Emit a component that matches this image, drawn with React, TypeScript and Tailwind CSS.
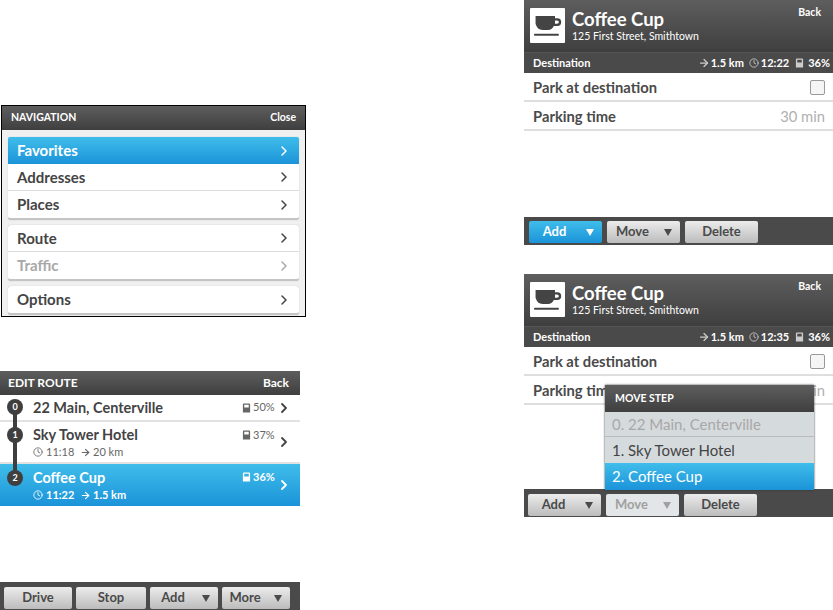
import React from 'react';
import { ChevronRight, Clock, ArrowRight } from 'lucide-react';

const font = "font-['Lato',sans-serif]";
const bar = 'bg-gradient-to-b from-[#5e5e5e] to-[#3f3f3f]';
const blue = 'bg-gradient-to-b from-[#3fbdea] to-[#1b93d9]';

const Battery = ({ className = '' }: { className?: string }) => (
  <svg viewBox="0 0 10 11" className={`w-[9px] h-[10px] ${className}`} fill="currentColor">
    <path d="M1 1.5 Q1 .5 2 .5 H8 Q9 .5 9 1.5 V10.5 H1 Z M2.5 2 V5 H7.5 V2 Z" fillRule="evenodd" />
  </svg>
);

const Triangle = ({ className = '' }: { className?: string }) => (
  <svg viewBox="0 0 8 8" className={`w-2 h-2 ${className}`} fill="currentColor">
    <path d="M0 1 H8 L4 8 Z" />
  </svg>
);

const CoffeeIcon = () => (
  <svg viewBox="0 0 36 30" className="w-[28px] h-[24px] text-[#444]" fill="currentColor">
    <path d="M2 2 H27 V5 H30 Q35 5 35 10 Q35 15 30 15 H25.5 Q23 20 18 20 H11 Q4 20 2 12 Z M27 8 V12 H29.5 Q32 12 32 10 Q32 8 29.5 8 Z" fillRule="evenodd" />
    <rect x="0" y="25" width="32" height="2.5" rx="1" />
  </svg>
);

const TopBar = ({ title, action, className }: { title: string; action: string; className: string }) => (
  <div className={`${bar} ${className} flex items-center justify-between text-white font-bold`}>
    <span>{title}</span>
    <span>{action}</span>
  </div>
);

const NavRow = ({ label, active, muted, line }: { label: string; active?: boolean; muted?: boolean; line?: boolean }) => (
  <div
    className={`h-[27px] flex items-center justify-between pl-[9px] pr-[7px] text-[15px] font-bold ${
      active ? `${blue} text-white rounded-t-[2px]` : muted ? 'text-[#a8a8a8]' : 'text-[#444]'
    } ${line ? 'border-b border-[#dcdcdc]' : ''}`}
  >
    <span>{label}</span>
    <ChevronRight className="w-4 h-4" strokeWidth={2.25} />
  </div>
);

const NavGroup = ({ children }: { children: React.ReactNode }) => (
  <div className="bg-white rounded-[3px] border-b-2 border-[#c4c4c4] shadow-[0_0_1px_#aaa]">{children}</div>
);

const ToolButton = ({
  label,
  width,
  menu,
  active,
  disabled,
}: {
  label: string;
  width: string;
  menu?: boolean;
  active?: boolean;
  disabled?: boolean;
}) => (
  <div
    className={`${width} h-[22px] rounded-[2px] flex items-center justify-center relative text-[13px] font-bold ${
      active
        ? `${blue} text-white`
        : disabled
          ? 'bg-[#e3e6e8] text-[#a0a0a0]'
          : 'bg-gradient-to-b from-[#ececec] to-[#bcbcbc] text-[#4a4a4a]'
    } ${menu ? 'pr-[22px]' : ''}`}
  >
    <span>{label}</span>
    {menu && <Triangle className="absolute right-[8px] top-[7px]" />}
  </div>
);

const StopRow = ({
  num,
  name,
  pct,
  sub,
  active,
}: {
  num: string;
  name: string;
  pct: string;
  sub?: [string, string];
  active?: boolean;
}) => (
  <div
    className={`flex items-center pl-[33px] pr-[8px] ${sub ? 'h-[42px]' : 'h-[27px]'} ${
      active ? `${blue} text-white` : 'bg-white text-[#444] border-b-2 border-[#e2e2e2]'
    }`}
  >
    <span
      className={`absolute left-[7px] w-[16px] h-[16px] rounded-full bg-[#3f3f3f] text-white text-[9px] font-bold flex items-center justify-center z-10 ${
        sub ? 'mt-[-15px]' : 'mt-[-2px]'
      }`}
    >
      {num}
    </span>
    <div className="flex-1 min-w-0">
      <div className="text-[14.5px] leading-[20px] font-bold">{name}</div>
      {sub && (
        <div className={`flex items-center text-[11px] leading-[14px] ${active ? 'font-bold' : 'text-[#666]'}`}>
          <Clock className="w-[10px] h-[10px] mr-[3px]" />
          <span className="w-[23px] whitespace-nowrap">{sub[0]}</span>
          <ArrowRight className="w-[11px] h-[11px] ml-[11px] mr-[2px]" strokeWidth={2.5} />
          <span>{sub[1]}</span>
        </div>
      )}
    </div>
    <div className={`flex items-center gap-[2px] text-[11px] w-[33px] ${sub ? 'self-start mt-[5px]' : ''} ${active ? 'font-bold' : 'text-[#666]'}`}>
      <Battery />
      <span>{pct}</span>
    </div>
    <ChevronRight className="w-4 h-4 ml-[1px]" strokeWidth={2.75} />
  </div>
);

const PlaceHeader = ({ time }: { time: string }) => (
  <>
    <div className={`${bar} h-[52px] flex items-start pl-[6px] pr-[12px] pt-[8px] text-white`}>
      <div className="w-[35px] h-[35px] bg-white rounded-[1px] flex items-center justify-center shrink-0">
        <CoffeeIcon />
      </div>
      <div className="ml-[7px] flex-1">
        <div className="text-[18.5px] leading-[22px] font-bold">Coffee Cup</div>
        <div className="text-[10.5px] leading-[12px]">125 First Street, Smithtown</div>
      </div>
      <span className="text-[10.5px] font-bold mt-[-3px]">Back</span>
    </div>
    <div className="h-[21px] bg-[#4a4a4a] border-t border-[#555] flex items-center justify-between pl-[9px] pr-[3px] text-white text-[11px] font-bold">
      <span>Destination</span>
      <div className="flex items-center">
        <ArrowRight className="w-[12px] h-[12px] text-[#ccc]" strokeWidth={2.5} />
        <span className="ml-[1px]">1.5 km</span>
        <Clock className="w-[10px] h-[10px] ml-[5px] mr-[2px] text-[#ccc]" />
        <span>{time}</span>
        <Battery className="ml-[6px] mr-[4px] text-[#ccc]" />
        <span>36%</span>
      </div>
    </div>
    <div className="h-[29px] pt-[1px] border-b-2 border-[#dedede] flex items-center justify-between pl-[9px] pr-[8px] text-[14.75px] font-bold text-[#4a4a4a]">
      <span>Park at destination</span>
      <span className="w-[15px] h-[15px] rounded-[2px] border border-[#999] bg-[#f5f5f5]" />
    </div>
    <div className="h-[29px] pt-[1px] border-b-2 border-[#dedede] flex items-center justify-between pl-[9px] pr-[8px] text-[14.75px] font-bold text-[#4a4a4a]">
      <span>Parking time</span>
      <span className="font-normal text-[#b0b0b0]">30 min</span>
    </div>
  </>
);

const Toolbar = ({ className = '', children }: { className?: string; children: React.ReactNode }) => (
  <div className={`absolute left-0 right-0 bottom-0 h-[28px] bg-[#4a4a4a] flex items-center ${className}`}>{children}</div>
);

export default function App() {
  return (
    <div className={`relative w-[833px] h-[610px] bg-white overflow-hidden ${font}`}>
      {/* Navigation */}
      <div className="absolute left-[1px] top-[105px] w-[305px] h-[212px] border border-black bg-[#f0f0f0]">
        <TopBar title="NAVIGATION" action="Close" className="h-[24px] mb-[1px] px-[9px] text-[10.5px]" />
        <div className="flex flex-col gap-[5px] px-[6px] pt-[6px]">
          <NavGroup>
            <NavRow label="Favorites" active />
            <NavRow label="Addresses" line />
            <NavRow label="Places" />
          </NavGroup>
          <NavGroup>
            <NavRow label="Route" line />
            <NavRow label="Traffic" muted />
          </NavGroup>
          <NavGroup>
            <NavRow label="Options" />
          </NavGroup>
        </div>
      </div>

      {/* Edit route */}
      <div className="absolute left-0 top-[371px] w-[300px] h-[239px] bg-white">
        <TopBar title="EDIT ROUTE" action="Back" className="h-[24px] pl-[8px] pr-[11px] text-[12px]" />
        <div className="relative">
          <div className="absolute left-[13px] top-[12px] w-[4px] h-[72px] bg-[#3f3f3f] z-10" />
          <StopRow num="0" name="22 Main, Centerville" pct="50%" />
          <StopRow num="1" name="Sky Tower Hotel" pct="37%" sub={['11:18', '20 km']} />
          <StopRow num="2" name="Coffee Cup" pct="36%" sub={['11:22', '1.5 km']} active />
        </div>
        <Toolbar className="gap-[4px] pl-[4px] pt-[4px]">
          <ToolButton label="Drive" width="w-[68px]" />
          <ToolButton label="Stop" width="w-[70px]" />
          <ToolButton label="Add" width="w-[68px]" menu />
          <ToolButton label="More" width="w-[68px]" menu />
        </Toolbar>
      </div>

      {/* Step details */}
      <div className="absolute left-[524px] top-0 w-[309px] h-[245px] bg-white">
        <PlaceHeader time="12:22" />
        <Toolbar className="gap-[5px] pl-[5px] pt-[1px]">
          <ToolButton label="Add" width="w-[73px]" menu active />
          <ToolButton label="Move" width="w-[73px]" menu />
          <ToolButton label="Delete" width="w-[73px]" />
        </Toolbar>
      </div>

      {/* Step details with move menu */}
      <div className="absolute left-[524px] top-[274px] w-[309px] h-[243px] bg-white">
        <PlaceHeader time="12:35" />
        <Toolbar className="gap-[5px] pl-[4px] pt-[3px]">
          <ToolButton label="Add" width="w-[73px]" menu />
          <ToolButton label="Move" width="w-[73px]" menu disabled />
          <ToolButton label="Delete" width="w-[73px]" />
        </Toolbar>
        <div className="absolute left-[81px] top-[111px] w-[209px] shadow-[0_0_2px_#333] bg-[#d5dadd] text-[15px]">
          <div className={`${bar} h-[27px] flex items-center pl-[10px] text-white text-[10.5px] font-bold`}>MOVE STEP</div>
          <div className="h-[25px] flex items-center pl-[7px] text-[#a8a8a8] border-b border-[#bbb]">0. 22 Main, Centerville</div>
          <div className="h-[26px] flex items-center pl-[7px] text-[#444]">1. Sky Tower Hotel</div>
          <div className={`${blue} h-[27px] flex items-center pl-[7px] text-white`}>2. Coffee Cup</div>
        </div>
      </div>
    </div>
  );
}
